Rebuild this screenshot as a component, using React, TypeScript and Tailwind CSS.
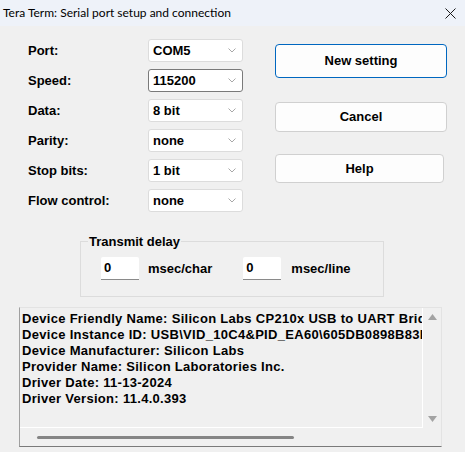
import React from "react";

const rows: [string, string, boolean][] = [
  ["Port:", "COM5", false],
  ["Speed:", "115200", true],
  ["Data:", "8 bit", false],
  ["Parity:", "none", false],
  ["Stop bits:", "1 bit", false],
  ["Flow control:", "none", false],
];

const info = [
  "Device Friendly Name: Silicon Labs CP210x USB to UART Bridge (COM5)",
  "Device Instance ID: USB\\VID_10C4&PID_EA60\\605DB0898B83ED11A0C6",
  "Device Manufacturer: Silicon Labs",
  "Provider Name: Silicon Laboratories Inc.",
  "Driver Date: 11-13-2024",
  "Driver Version: 11.4.0.393",
];

function Chevron() {
  return (
    <svg width="8" height="5" viewBox="0 0 8 5" className="shrink-0">
      <path d="M0.5 0.5 L4 4 L7.5 0.5" fill="none" stroke="#a8a8a8" strokeWidth="1" />
    </svg>
  );
}

function Combo({ value, focused }: { value: string; focused: boolean }) {
  return (
    <div
      className={
        "w-[95px] h-[23px] bg-white rounded-[3px] flex items-center justify-between pl-[4px] pr-[6px] border " +
        (focused ? "border-[#7a7a7a]" : "border-[#dcdcdc]")
      }
    >
      <span>{value}</span>
      <Chevron />
    </div>
  );
}

function Edit({ value }: { value: string }) {
  return (
    <div className="w-[38px] h-[23px] bg-white border-b border-[#8a8a8a] flex items-center pl-[3px] rounded-t-[2px]">
      {value}
    </div>
  );
}

export default function App() {
  return (
    <div
      className="w-[465px] h-[452px] bg-[#f0f0f0] text-black overflow-hidden flex flex-col"
      style={{ fontFamily: '"Liberation Sans", Arial, sans-serif' }}
    >
      <div
        className="h-[26px] shrink-0 bg-[#eef2f9] flex items-center justify-between pl-[3px] pr-[9px] text-[12px]"
        style={{ fontFamily: 'Lato, "Noto Sans", sans-serif' }}
      >
        <span>Tera Term: Serial port setup and connection</span>
        <svg width="11" height="11" viewBox="0 0 11 11">
          <path d="M0.5 0.5 L10.5 10.5 M10.5 0.5 L0.5 10.5" stroke="#1a1a1a" strokeWidth="1" />
        </svg>
      </div>

      <div className="flex-1 text-[13px] font-bold">
        <div className="flex pt-[13px]">
          <div className="flex flex-col gap-[7px] ml-[28px]">
            {rows.map(([label, value, focused]) => (
              <div key={label} className="flex items-center h-[23px]">
                <span className="w-[120px]">{label}</span>
                <Combo value={value} focused={focused} />
              </div>
            ))}
          </div>
          <div className="flex flex-col ml-[32px] pt-[5px]">
            <button className="w-[172px] h-[34px] rounded-[4px] border border-[#0067c0] bg-[#fdfdfd] font-bold">
              New setting
            </button>
            <button className="w-[172px] h-[30px] mt-[24px] rounded-[4px] border border-[#d0d0d0] bg-[#fdfdfd] font-bold">
              Cancel
            </button>
            <button className="w-[169px] h-[29px] mt-[22px] rounded-[4px] border border-[#d0d0d0] bg-[#fdfdfd] font-bold">
              Help
            </button>
          </div>
        </div>

        <div className="relative ml-[80px] mt-[29px] w-[304px] h-[56px] border border-[#dcdcdc] pl-[20px] pt-[15px]">
          <span className="absolute left-[7px] top-[-8px] px-[1px] bg-[#f0f0f0] leading-[16px]">
            Transmit delay
          </span>
          <div className="flex items-center">
            <Edit value="0" />
            <span className="ml-[9px]">msec/char</span>
            <div className="ml-[31px]">
              <Edit value="0" />
            </div>
            <span className="ml-[10px]">msec/line</span>
          </div>
        </div>

        <div className="ml-[19px] mt-[10px] w-[423px] h-[140px] border-l border-b border-l-[#a0a0a0] border-b-[#7a7a7a] border-t border-r border-t-[#e3e3e3] border-r-[#e3e3e3] flex flex-col">
          <div className="flex flex-1 min-h-0">
            <div className="flex-1 min-w-0 overflow-hidden border-r border-b border-white pl-[2px] pt-[3px] tracking-[0.3px]">
              {info.map((t) => (
                <div key={t} className="whitespace-nowrap leading-[16px]">
                  {t}
                </div>
              ))}
            </div>
            <div className="w-[18px] flex flex-col items-center justify-between pt-[6px] pb-[6px]">
              <svg width="9" height="6" viewBox="0 0 9 6">
                <path d="M0 6 L4.5 0 L9 6 Z" fill="#a3a3a3" />
              </svg>
              <svg width="9" height="6" viewBox="0 0 9 6">
                <path d="M0 0 L4.5 6 L9 0 Z" fill="#a3a3a3" />
              </svg>
            </div>
          </div>
          <div className="h-[18px] shrink-0 flex items-center pl-[17px]">
            <div className="w-[257px] h-[3px] bg-[#858585] rounded-full" />
          </div>
        </div>
      </div>
    </div>
  );
}
